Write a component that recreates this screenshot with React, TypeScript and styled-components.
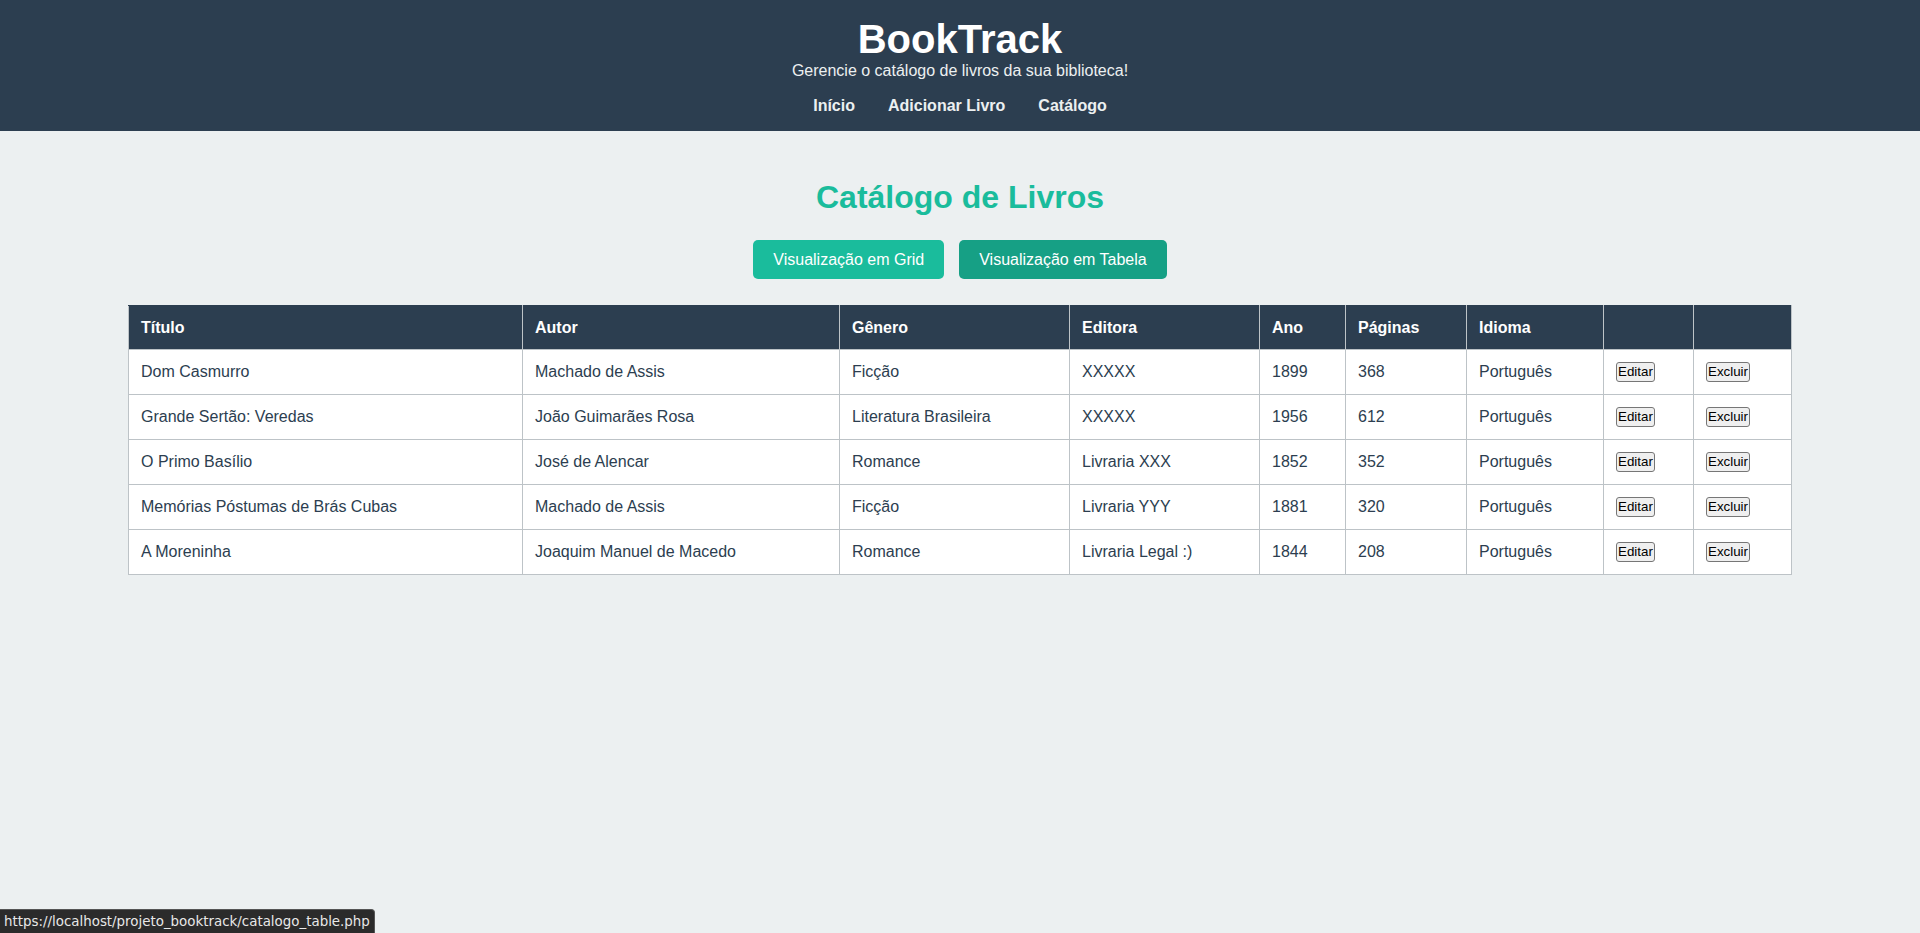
import { FC, useState } from 'react';

import styled, { createGlobalStyle } from 'styled-components';

const COLOR_DARK = '#2c3e50';
const COLOR_TEAL = '#1abc9c';
const COLOR_TEAL_DARK = '#16a085';
const COLOR_BG = '#ecf0f1';
const COLOR_BORDER = '#bdc3c7';

type Book = {
  titulo: string;
  autor: string;
  genero: string;
  editora: string;
  ano: number;
  paginas: number;
  idioma: string;
};

const BOOKS: Book[] = [
  { titulo: 'Dom Casmurro', autor: 'Machado de Assis', genero: 'Ficção', editora: 'XXXXX', ano: 1899, paginas: 368, idioma: 'Português' },
  { titulo: 'Grande Sertão: Veredas', autor: 'João Guimarães Rosa', genero: 'Literatura Brasileira', editora: 'XXXXX', ano: 1956, paginas: 612, idioma: 'Português' },
  { titulo: 'O Primo Basílio', autor: 'José de Alencar', genero: 'Romance', editora: 'Livraria XXX', ano: 1852, paginas: 352, idioma: 'Português' },
  { titulo: 'Memórias Póstumas de Brás Cubas', autor: 'Machado de Assis', genero: 'Ficção', editora: 'Livraria YYY', ano: 1881, paginas: 320, idioma: 'Português' },
  { titulo: 'A Moreninha', autor: 'Joaquim Manuel de Macedo', genero: 'Romance', editora: 'Livraria Legal :)', ano: 1844, paginas: 208, idioma: 'Português' },
];

const COLUMNS = [
  { label: 'Título', width: 394 },
  { label: 'Autor', width: 317 },
  { label: 'Gênero', width: 230 },
  { label: 'Editora', width: 190 },
  { label: 'Ano', width: 86 },
  { label: 'Páginas', width: 121 },
  { label: 'Idioma', width: 137 },
  { label: '', width: 90 },
  { label: '', width: 98 },
];

const NAV = ['Início', 'Adicionar Livro', 'Catálogo'];

const App: FC = () => {
  const [view, setView] = useState<'grid' | 'tabela'>('tabela');

  return (
    <>
      <GlobalStyle />
      <Header>
        <Brand>BookTrack</Brand>
        <Tagline>Gerencie o catálogo de livros da sua biblioteca!</Tagline>
        <Nav>
          {NAV.map((item) => (
            <NavLink key={item} href="#">
              {item}
            </NavLink>
          ))}
        </Nav>
      </Header>

      <Main>
        <PageTitle>Catálogo de Livros</PageTitle>
        <ViewToggle>
          <ViewButton active={view === 'grid'} onClick={() => setView('grid')}>
            Visualização em Grid
          </ViewButton>
          <ViewButton active={view === 'tabela'} onClick={() => setView('tabela')}>
            Visualização em Tabela
          </ViewButton>
        </ViewToggle>

        <Table>
          <colgroup>
            {COLUMNS.map((col, i) => (
              <col key={i} style={{ width: col.width }} />
            ))}
          </colgroup>
          <thead>
            <tr>
              {COLUMNS.map((col, i) => (
                <Th key={i}>{col.label}</Th>
              ))}
            </tr>
          </thead>
          <tbody>
            {BOOKS.map((book) => (
              <tr key={book.titulo}>
                <Td>{book.titulo}</Td>
                <Td>{book.autor}</Td>
                <Td>{book.genero}</Td>
                <Td>{book.editora}</Td>
                <Td>{book.ano}</Td>
                <Td>{book.paginas}</Td>
                <Td>{book.idioma}</Td>
                <Td>
                  <ActionButton>Editar</ActionButton>
                </Td>
                <Td>
                  <ActionButton>Excluir</ActionButton>
                </Td>
              </tr>
            ))}
          </tbody>
        </Table>
      </Main>

      <StatusBubble>https://localhost/projeto_booktrack/catalogo_table.php</StatusBubble>
    </>
  );
};

export default App;

const GlobalStyle = createGlobalStyle`
  html, body {
    margin: 0;
    padding: 0;
    background: ${COLOR_BG};
    font-family: "Liberation Sans", Arial, sans-serif;
    color: ${COLOR_DARK};
  }

  #root {
    min-height: 100vh;
  }
`;

const Header = styled.header`
  background: ${COLOR_DARK};
  color: #ffffff;
  text-align: center;
  padding: 16px 0 16px;
`;

const Brand = styled.h1`
  margin: 0;
  font-size: 40px;
  font-weight: 700;
  line-height: 46px;
  color: #ffffff;
`;

const Tagline = styled.p`
  margin: 0;
  font-size: 16px;
  line-height: 18px;
  color: #ecf0f1;
`;

const Nav = styled.nav`
  display: flex;
  justify-content: center;
  gap: 33px;
  margin-top: 17px;
`;

const NavLink = styled.a`
  color: #ecf0f1;
  font-weight: 700;
  font-size: 16px;
  line-height: 18px;
  text-decoration: none;
`;

const Main = styled.main`
  padding: 48px 0 40px;
`;

const PageTitle = styled.h2`
  margin: 0 0 24px;
  text-align: center;
  font-size: 32px;
  line-height: 37px;
  font-weight: 700;
  color: ${COLOR_TEAL};
`;

const ViewToggle = styled.div`
  display: flex;
  justify-content: center;
  gap: 15px;
  margin-bottom: 26px;
`;

const ViewButton = styled.button<{ active: boolean }>`
  background: ${({ active }) => (active ? COLOR_TEAL_DARK : COLOR_TEAL)};
  color: #ffffff;
  border: none;
  border-radius: 5px;
  padding: 10px 20px;
  height: 39px;
  font-family: "Liberation Sans", Arial, sans-serif;
  font-size: 16px;
  cursor: pointer;
`;

const Table = styled.table`
  width: 1663px;
  margin: 0 auto;
  table-layout: fixed;
  border-collapse: collapse;
  background: #ffffff;
  border: 1px solid ${COLOR_BORDER};
`;

const Th = styled.th`
  background: ${COLOR_DARK};
  color: #ffffff;
  text-align: left;
  font-size: 16px;
  font-weight: 700;
  line-height: 19px;
  padding: 12px;
  border: 1px solid ${COLOR_BORDER};
  border-top-color: ${COLOR_DARK};
`;

const Td = styled.td`
  height: 20px;
  font-size: 16px;
  line-height: 20px;
  padding: 12px;
  color: ${COLOR_DARK};
  border: 1px solid ${COLOR_BORDER};
  white-space: nowrap;
  vertical-align: middle;
`;

const ActionButton = styled.button`
  display: block;
  height: 20px;
  font-family: "Liberation Sans", Arial, sans-serif;
  font-size: 13.33px;
  line-height: 16px;
  color: #000000;
  background: #efefef;
  border: 1px solid #767676;
  border-radius: 3px;
  padding: 1px 1px;
  cursor: pointer;
`;

const StatusBubble = styled.div`
  position: fixed;
  left: 0;
  bottom: 0;
  height: 23px;
  padding: 0 4px;
  display: flex;
  align-items: center;
  background: #2b2b2b;
  color: #e8e8e8;
  font-family: "DejaVu Sans", sans-serif;
  font-size: 13.4px;
  border-top-right-radius: 4px;
  border: 1px solid #555;
  border-left: none;
  border-bottom: none;
`;
